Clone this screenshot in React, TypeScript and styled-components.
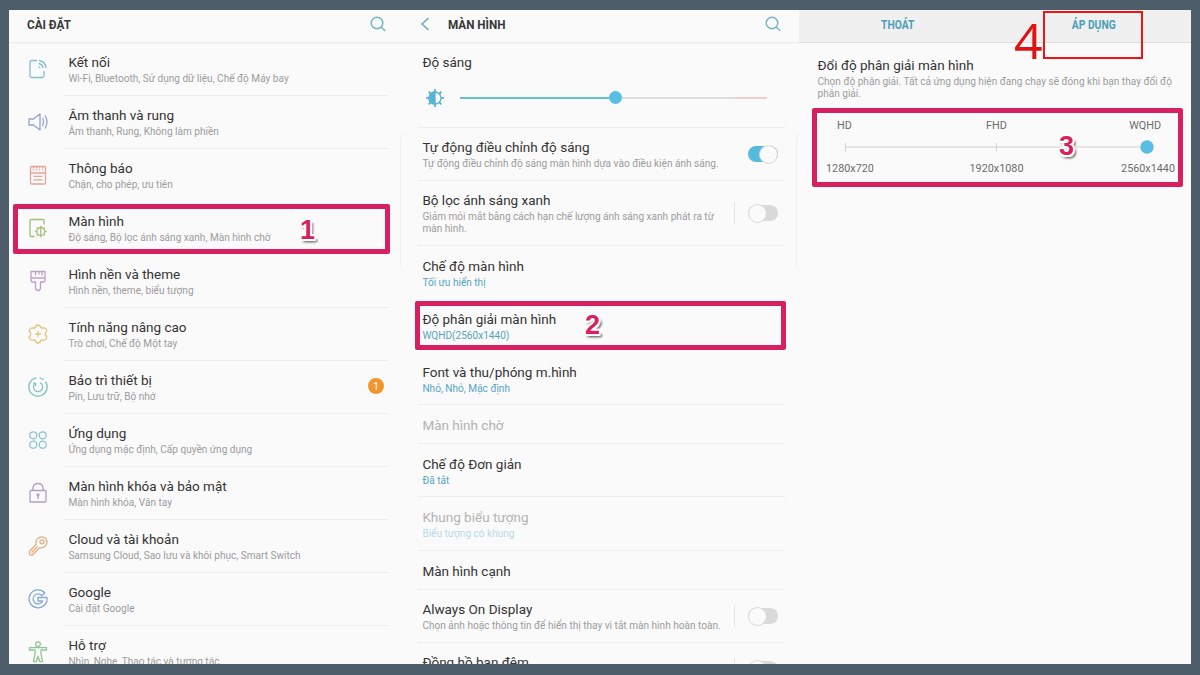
import React from "react";
import styled, { createGlobalStyle } from "styled-components";

const GlobalStyle = createGlobalStyle`
  * { box-sizing: border-box; }
  html, body { margin: 0; padding: 0; }
  body {
    width: 1200px;
    height: 675px;
    overflow: hidden;
    background: #4d5d69;
    font-family: Roboto, "Noto Sans", sans-serif;
  }
`;

const Frame = styled.main`
  width: 1200px;
  height: 675px;
  padding: 10px 9px 11px;
  background: #4d5d69;
`;

const Board = styled.div`
  position: relative;
  display: grid;
  grid-template-columns: 391px 399px 392px;
  height: 654px;
  background: #fafafa;
`;

const Panel = styled.section`
  height: 654px;
  overflow: hidden;
`;

const Header = styled.header<{ $left: number; $right: number }>`
  display: flex;
  align-items: center;
  height: 33px;
  padding: 0 ${(p) => p.$right}px 4px ${(p) => p.$left}px;
  border-bottom: 1px solid #ececec;
  box-shadow: 0 1px 0 #f4f4f4;
`;

const HeaderTitle = styled.h1`
  flex: 1;
  margin: 0;
  font-size: 13.6px;
  line-height: 18px;
  font-weight: 700;
  color: #383838;
  white-space: nowrap;
  transform: scaleX(0.86);
  transform-origin: left;
`;

const BackIcon = styled.svg`
  width: 10px;
  height: 14px;
  margin-right: 18px;
`;

const SearchGlyph = styled.svg`
  width: 16px;
  height: 16px;
`;

const SettingRow = styled.div`
  display: grid;
  grid-template-columns: 55px 325px;
  height: 53px;
`;

const IconCell = styled.div`
  padding: 15px 0 0 18px;
  svg { display: block; width: 22px; height: 22px; }
`;

const RowBody = styled.div<{ $inset: number; $plain?: boolean; $height?: number; $top?: number }>`
  display: flex;
  justify-content: space-between;
  height: ${(p) => (p.$height ? p.$height + "px" : "auto")};
  padding: ${(p) => p.$top ?? 11}px 0 0 ${(p) => p.$inset}px;
  border-bottom: 1px solid ${(p) => (p.$plain ? "transparent" : "#ededed")};
`;

const DisplayList = styled.div`
  margin-left: 18px;
  width: 367px;
`;

const Copy = styled.div`
  white-space: nowrap;
`;

const Title = styled.div<{ $dim?: boolean }>`
  padding-bottom: 2px;
  font-size: 13.5px;
  line-height: 16px;
  color: ${(p) => (p.$dim ? "#b3b3b3" : "#343434")};
`;

const Sub = styled.div<{ $tone?: "blue" | "pale" }>`
  margin-top: 1px;
  font-size: 10.08px;
  line-height: 12px;
  color: ${(p) => (p.$tone === "blue" ? "#55a5bf" : p.$tone === "pale" ? "#b5dbe7" : "#9c9c9c")};
`;

const Badge = styled.span`
  display: flex;
  align-items: center;
  justify-content: center;
  width: 16px;
  height: 16px;
  margin: 6px 5px 0 0;
  border-radius: 50%;
  background: #f0962c;
  color: #fff;
  font-size: 10px;
`;

const Brightness = styled.div`
  height: 85px;
  padding: 11px 0 0 4.4px;
  border-bottom: 1px solid #ededed;
`;

const SliderLine = styled.div`
  display: flex;
  align-items: center;
  height: 20px;
  margin-top: 15.5px;
`;

const SunIcon = styled.svg`
  width: 20px;
  height: 20px;
  margin: 0 15px 0 2.6px;
`;

const Track = styled.div`
  display: flex;
  align-items: center;
  width: 307px;
`;

const Segment = styled.span<{ $w: number; $c: string }>`
  width: ${(p) => p.$w}px;
  height: 2px;
  background: ${(p) => p.$c};
`;

const Knob = styled.span`
  flex: none;
  width: 13px;
  height: 13px;
  border-radius: 50%;
  background: #56bfe3;
`;

const SwitchCell = styled.div<{ $top: number; $divider?: boolean }>`
  display: flex;
  align-items: center;
  height: 22px;
  margin: ${(p) => p.$top}px 7px 0 0;
  padding-left: 13px;
  border-left: 1px solid ${(p) => (p.$divider ? "#e4e4e4" : "transparent")};
`;

const Toggle = styled.span<{ $on?: boolean }>`
  display: flex;
  align-items: center;
  justify-content: ${(p) => (p.$on ? "flex-end" : "flex-start")};
  width: 30px;
  height: 16px;
  border-radius: 8px;
  background: ${(p) => (p.$on ? "#56bade" : "#dadada")};
  &::after {
    content: "";
    width: 17px;
    height: 17px;
    flex: none;
    border-radius: 50%;
    border: 1px solid #d9d9d9;
    background: #fafafa;
  }
`;

const ActionBar = styled.div`
  display: grid;
  grid-template-columns: 1fr 1fr;
  height: 33px;
  padding: 0 0 3px 1px;
  background: #f0f0f0;
  border-bottom: 1px solid #dedede;
`;

const Action = styled.button`
  border: 0;
  padding: 0;
  background: none;
  font: 700 13px/18px Roboto, "Noto Sans", sans-serif;
  color: #4a9fb8;
  transform: scaleX(0.79);
`;

const Resolution = styled.div`
  padding: 14px 0 0 18.5px;
`;

const Scale = styled.div`
  display: grid;
  grid-template-columns: 54px 1fr 54px;
  width: 349px;
  margin: 19px 0 0 7.5px;
  font-size: 10.8px;
  line-height: 14px;
  color: #6c6c6c;
`;

const ScaleLabel = styled.span<{ $align: string; $pad?: string }>`
  text-align: ${(p) => p.$align};
  padding: ${(p) => p.$pad ?? "0"};
  white-space: nowrap;
`;

const ScaleTrack = styled.svg`
  grid-column: 1 / -1;
  width: 350px;
  height: 14px;
  margin: 7px 0 8px;
`;

const Mark = styled.div<{ $x: number; $y: number; $w: number; $h: number; $red?: boolean }>`
  position: absolute;
  left: ${(p) => p.$x}px;
  top: ${(p) => p.$y}px;
  width: ${(p) => p.$w}px;
  height: ${(p) => p.$h}px;
  border: ${(p) => (p.$red ? "2px solid #ee1515" : "5px solid #d6205f")};
  border-radius: ${(p) => (p.$red ? 0 : 2)}px;
`;

const Step = styled.span<{ $x: number; $y: number }>`
  position: absolute;
  left: ${(p) => p.$x}px;
  top: ${(p) => p.$y}px;
  font: 700 27px/30px "Liberation Sans", sans-serif;
  color: #d81f60;
  text-shadow: -2px 0 0 #fff, 2px 0 0 #fff, 0 -2px 0 #fff, 0 2px 0 #fff, 1.5px 1.5px 0 #fff,
    -1.5px 1.5px 0 #fff, -1.5px -1.5px 0 #fff, 1.5px -1.5px 0 #fff,
    3px 3px 2px #777, 1px 3px 3px #888;
`;

const BigStep = styled.span`
  position: absolute;
  left: 1005px;
  top: 0;
  font: 400 50px/60px "Open Sans", sans-serif;
  color: #e01212;
`;

const EdgeHandle = styled.span<{ $x: number }>`
  position: absolute;
  left: ${(p) => p.$x}px;
  top: 123px;
  width: 5px;
  height: 138px;
  border: 1px solid #f1f1f1;
  border-right: 0;
  border-radius: 5px 0 0 5px;
`;

const Svg = ({ color, children }: { color: string; children: React.ReactNode }) => (
  <svg viewBox="0 0 22 22" fill="none" stroke={color} strokeWidth="1.3" strokeLinejoin="round">
    {children}
  </svg>
);

const icons = {
  connect: (
    <Svg color="#86bdd2">
      <path d="M10 2.5H4.5Q3 2.5 3 4V18Q3 19.5 4.5 19.5H15.5Q17 19.5 17 18V13" />
      <path d="M12 2.5Q18.5 3.5 19 10M11.5 5.5Q15.5 6 16 10M11.5 8.5Q13 9 13 10.2" />
    </Svg>
  ),
  sound: (
    <Svg color="#93a5cf">
      <path d="M2 8H6.5L13 3V19L6.5 14H2Z" />
      <path d="M15.5 7Q17.5 11 15.5 15M18 4.5Q22 11 18 17.5" />
    </Svg>
  ),
  notice: (
    <Svg color="#e5a49b">
      <rect x="3.5" y="2.5" width="15" height="17.5" rx="1" />
      <path d="M3.5 9H18.5M6.5 12.3H15.5M6.5 15.8H15.5" />
      <path d="M6.5 3V6.5M9.5 3V6.5M12.5 3V6.5M15.5 3V6.5" strokeDasharray="1.5 0.8" />
    </Svg>
  ),
  display: (
    <Svg color="#a3be78">
      <path d="M7.5 19.5H4Q3 19.5 3 18.5V3.5Q3 2.5 4 2.5H16Q17 2.5 17 3.5V7.5" />
      <circle cx="13.8" cy="14.5" r="4" />
      <path d="M13.8 8.8V20.2M8 14.5H9.8M17.8 14.5H19.6M9.8 10.5L11 11.7M17.8 10.5L16.6 11.7M9.8 18.5L11 17.3M17.8 18.5L16.6 17.3" />
    </Svg>
  ),
  brush: (
    <Svg color="#bd9fcd">
      <path d="M4 1.5H18V10.5Q18 12 16.5 12H13.5V17.5Q13.5 20.5 11 20.5T8.5 17.5V12H5.5Q4 12 4 10.5Z" />
      <path d="M4 8H18M8.5 1.5V5.5M12 1.5V4.5M15 1.5V5.5" />
    </Svg>
  ),
  gear: (
    <Svg color="#e2c37a">
      <path d="M8.3 4.5Q9 2 11 2T13.7 4.5Q14.5 5.3 16.2 4.8Q18.5 4.7 19.4 6.5T18.4 10Q18 11 18.4 12Q20.5 13.8 19.4 15.5T16.2 17.2Q14.5 16.7 13.7 17.5Q13 20 11 20T8.3 17.5Q7.5 16.7 5.8 17.2Q3.5 17.3 2.6 15.5T3.6 12Q4 11 3.6 10Q1.5 8.2 2.6 6.5T5.8 4.8Q7.5 5.3 8.3 4.5Z" />
      <path d="M11 8V14M8 11H14" />
    </Svg>
  ),
  care: (
    <Svg color="#84c5c5">
      <path d="M9.5 1.9A9.2 9.2 0 1 0 18.5 5.7M16.7 3.7A9.2 9.2 0 0 0 12.5 1.9" />
      <path d="M13 6.8A4.6 4.6 0 1 1 8 7.6M6 7.2H8.6V10" />
    </Svg>
  ),
  apps: (
    <Svg color="#85c2d2">
      <circle cx="6.3" cy="6.3" r="3.5" />
      <circle cx="15.7" cy="6.3" r="3.5" />
      <circle cx="6.3" cy="15.7" r="3.5" />
      <circle cx="15.7" cy="15.7" r="3.5" />
    </Svg>
  ),
  lock: (
    <Svg color="#aaa0c8">
      <rect x="3" y="8.5" width="16" height="11.5" rx="1" />
      <path d="M6 8.5V6.5Q6 1.5 11 1.5T16 6.5V8.5M11 13V17" />
      <circle cx="11" cy="12.8" r="1" />
    </Svg>
  ),
  key: (
    <Svg color="#e2ae84">
      <path d="M9 9.5Q8.5 5 11.5 3Q14 1 17.5 2.5Q21 5 19.5 9Q17.5 13.5 12.5 12.8L5.5 20Q3.5 20.5 2.3 19V16.5Z" />
      <path d="M4.5 17.8L10.5 11.5" />
      <circle cx="15" cy="6.8" r="2" />
    </Svg>
  ),
  google: (
    <Svg color="#86a9d6">
      <path d="M17.8 4.8A9 9 0 1 0 20 9.5H11V13H15.6A5 5 0 1 1 14.9 7.7Z" />
    </Svg>
  ),
  help: (
    <Svg color="#94c492">
      <circle cx="11" cy="3.2" r="2.4" />
      <path d="M2.5 6.7H19.5V9H14V12.7L15.5 20.7H12.8L11 15.2L9.2 20.7H6.5L8 12.7V9H2.5Z" />
    </Svg>
  ),
};

type Setting = { icon: keyof typeof icons; title: string; sub: string; boxed?: boolean; badge?: string };

const settings: Setting[] = [
  { icon: "connect", title: "Kết nối", sub: "Wi-Fi, Bluetooth, Sử dụng dữ liệu, Chế độ Máy bay" },
  { icon: "sound", title: "Âm thanh và rung", sub: "Âm thanh, Rung, Không làm phiền" },
  { icon: "notice", title: "Thông báo", sub: "Chặn, cho phép, ưu tiên", boxed: true },
  { icon: "display", title: "Màn hình", sub: "Độ sáng, Bộ lọc ánh sáng xanh, Màn hình chờ", boxed: true },
  { icon: "brush", title: "Hình nền và theme", sub: "Hình nền, theme, biểu tượng" },
  { icon: "gear", title: "Tính năng nâng cao", sub: "Trò chơi, Chế độ Một tay" },
  { icon: "care", title: "Bảo trì thiết bị", sub: "Pin, Lưu trữ, Bộ nhớ", badge: "1" },
  { icon: "apps", title: "Ứng dụng", sub: "Ứng dụng mặc định, Cấp quyền ứng dụng" },
  { icon: "lock", title: "Màn hình khóa và bảo mật", sub: "Màn hình khóa, Vân tay" },
  { icon: "key", title: "Cloud và tài khoản", sub: "Samsung Cloud, Sao lưu và khôi phục, Smart Switch" },
  { icon: "google", title: "Google", sub: "Cài đặt Google" },
  { icon: "help", title: "Hỗ trợ", sub: "Nhìn, Nghe, Thao tác và tương tác" },
];

const SearchIcon = () => (
  <SearchGlyph viewBox="0 0 16 16" fill="none" stroke="#72b3bf" strokeWidth="1.4" strokeLinecap="round">
    <circle cx="7" cy="7" r="5.8" />
    <path d="M11.3 11.3L14.8 14.5" />
  </SearchGlyph>
);

const SettingsPanel = () => (
  <Panel>
    <Header $left={18} $right={14}>
      <HeaderTitle>CÀI ĐẶT</HeaderTitle>
      <SearchIcon />
    </Header>
    {settings.map((s) => (
      <SettingRow key={s.title}>
        <IconCell>{icons[s.icon]}</IconCell>
        <RowBody $inset={4.4} $plain={s.boxed}>
          <Copy>
            <Title>{s.title}</Title>
            <Sub>{s.sub}</Sub>
          </Copy>
          {s.badge && <Badge>{s.badge}</Badge>}
        </RowBody>
      </SettingRow>
    ))}
  </Panel>
);

type Option = {
  title: string;
  lines?: string[];
  tone?: "blue" | "pale";
  dim?: boolean;
  height: number;
  top?: number;
  plain?: boolean;
  toggle?: "on" | "off";
  toggleTop?: number;
};

const options: Option[] = [
  { title: "Tự động điều chỉnh độ sáng", lines: ["Tự động điều chỉnh độ sáng màn hình dựa vào điều kiện ánh sáng."], height: 53, toggle: "on", toggleTop: 4 },
  { title: "Bộ lọc ánh sáng xanh", lines: ["Giảm mỏi mắt bằng cách hạn chế lượng ánh sáng xanh phát ra từ", "màn hình."], height: 65, toggle: "off", toggleTop: 10 },
  { title: "Chế độ màn hình", lines: ["Tối ưu hiển thị"], tone: "blue", height: 53, top: 12, plain: true },
  { title: "Độ phân giải màn hình", lines: ["WQHD(2560x1440)"], tone: "blue", height: 53, top: 12, plain: true },
  { title: "Font và thu/phóng m.hình", lines: ["Nhỏ, Nhỏ, Mặc định"], tone: "blue", height: 53, top: 12 },
  { title: "Màn hình chờ", dim: true, height: 39, top: 12 },
  { title: "Chế độ Đơn giản", lines: ["Đã tắt"], tone: "blue", height: 53, top: 12 },
  { title: "Khung biểu tượng", lines: ["Biểu tượng có khung"], tone: "pale", dim: true, height: 54, top: 12 },
  { title: "Màn hình cạnh", height: 39, top: 12 },
  { title: "Always On Display", lines: ["Chọn ảnh hoặc thông tin để hiển thị thay vì tắt màn hình hoàn toàn."], height: 53, toggle: "off", toggleTop: 4 },
  { title: "Đồng hồ ban đêm", height: 53, toggle: "off", toggleTop: 4 },
];

const rays = [0, 45, 90, 135, 180, 225, 270, 315];

const DisplayPanel = () => (
  <Panel>
    <Header $left={20} $right={18}>
      <BackIcon viewBox="0 0 10 14" fill="none" stroke="#62a9b9" strokeWidth="1.5">
        <path d="M8.5 1L2 7L8.5 13" />
      </BackIcon>
      <HeaderTitle>MÀN HÌNH</HeaderTitle>
      <SearchIcon />
    </Header>
    <DisplayList>
      <Brightness>
        <Title>Độ sáng</Title>
        <SliderLine>
          <SunIcon viewBox="0 0 20 20" fill="none" stroke="#58b4d6" strokeWidth="1.3">
            <circle cx="10" cy="10" r="6" />
            <path d="M10 4A6 6 0 0 0 10 16Z" fill="#58b4d6" />
            {rays.map((a) => (
              <path key={a} d="M10 4L10 1" transform={`rotate(${a} 10 10)`} strokeWidth="1.8" />
            ))}
          </SunIcon>
          <Track>
            <Segment $w={149} $c="#66bedb" />
            <Knob />
            <Segment $w={113} $c="#dddddd" />
            <Segment $w={32} $c="#f0cdc8" />
          </Track>
        </SliderLine>
      </Brightness>
      {options.map((o) => (
        <RowBody key={o.title} $inset={4.4} $height={o.height} $top={o.top} $plain={o.plain}>
          <Copy>
            <Title $dim={o.dim}>{o.title}</Title>
            {o.lines && (
              <Sub $tone={o.tone}>
                {o.lines.map((l) => (
                  <div key={l}>{l}</div>
                ))}
              </Sub>
            )}
          </Copy>
          {o.toggle && (
            <SwitchCell $top={o.toggleTop ?? 0} $divider={o.toggle === "off"}>
              <Toggle $on={o.toggle === "on"} />
            </SwitchCell>
          )}
        </RowBody>
      ))}
    </DisplayList>
  </Panel>
);

const ResolutionPanel = () => (
  <Panel>
    <ActionBar>
      <Action>THOÁT</Action>
      <Action>ÁP DỤNG</Action>
    </ActionBar>
    <Resolution>
      <Title>Đổi độ phân giải màn hình</Title>
      <Sub>
        Chọn độ phân giải. Tất cả ứng dụng hiện đang chạy sẽ đóng khi bạn thay đổi độ
        <br />
        phân giải.
      </Sub>
      <Scale>
        <ScaleLabel $align="left" $pad="0 0 0 12px">HD</ScaleLabel>
        <ScaleLabel $align="center" $pad="0 7px 0 0">FHD</ScaleLabel>
        <ScaleLabel $align="right" $pad="0 14px 0 0">WQHD</ScaleLabel>
        <ScaleTrack viewBox="0 0 350 14">
          <path d="M20.5 7H321M20.5 3V11.5M171.5 3V11.5" stroke="#d2d2d2" fill="none" />
          <circle cx="322" cy="7" r="6.7" fill="#56bfe3" />
        </ScaleTrack>
        <ScaleLabel $align="left" $pad="0 0 0 1px">1280x720</ScaleLabel>
        <ScaleLabel $align="center" $pad="0 7px 0 0">1920x1080</ScaleLabel>
        <ScaleLabel $align="right">2560x1440</ScaleLabel>
      </Scale>
    </Resolution>
  </Panel>
);

export default function App() {
  return (
    <Frame>
      <GlobalStyle />
      <Board>
        <SettingsPanel />
        <DisplayPanel />
        <ResolutionPanel />
        <EdgeHandle $x={391} />
        <EdgeHandle $x={787} />
        <Mark $x={4} $y={194} $w={377} $h={50} />
        <Mark $x={406} $y={291} $w={371} $h={49} />
        <Mark $x={803} $y={98} $w={371} $h={79} />
        <Mark $x={1034} $y={1} $w={100} $h={48} $red />
        <Step $x={291} $y={205}>1</Step>
        <Step $x={576} $y={300}>2</Step>
        <Step $x={1050} $y={121}>3</Step>
        <BigStep>4</BigStep>
      </Board>
    </Frame>
  );
}
